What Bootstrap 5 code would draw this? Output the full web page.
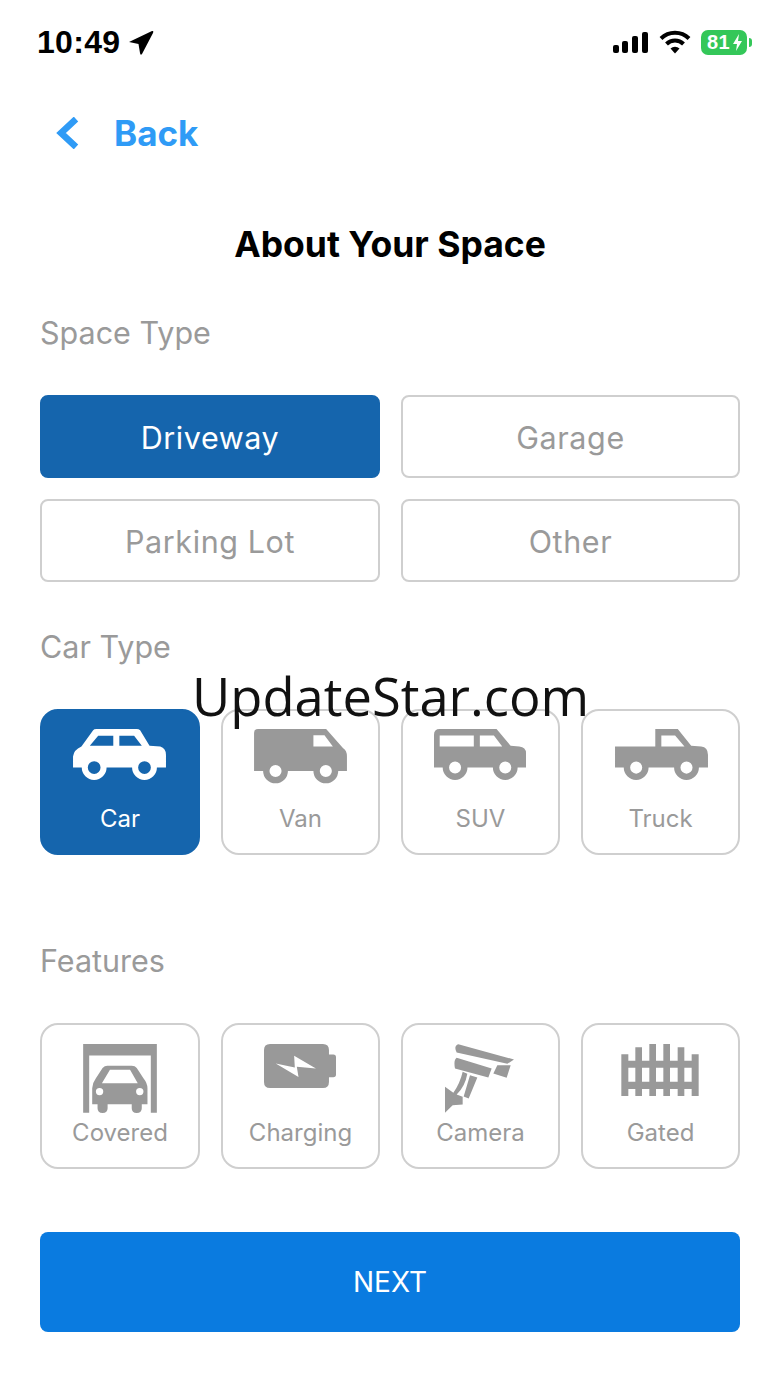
<!doctype html>
<html lang="en"><head><meta charset="utf-8"><title>About Your Space</title>
<link href="https://cdn.jsdelivr.net/npm/bootstrap@5.3.0/dist/css/bootstrap.min.css" rel="stylesheet">
<style>
html,body{background:#fff}
.screen{position:relative;width:780px;height:1387px;overflow:hidden;padding:0 40px;font-family:Inter,"Liberation Sans",sans-serif}
.statusrow{height:84px;margin:0 -12px 0 -3px}
.clock{font-family:"Liberation Sans",sans-serif;font-weight:700;font-size:32px;line-height:1;color:#000;letter-spacing:.3px}
.sig{margin-right:9px}
.wifi{margin-right:10px}
.backrow{height:50px;margin-top:24px;color:#2f9bf6;font-size:35px;font-weight:700;line-height:50px;text-decoration:none;padding-left:16px;gap:33px}
.pagehead{height:50px;margin:62px 0 0;font-size:35.500px;font-weight:700;line-height:50px;color:#000;text-align:center}
.sectionhead{height:40px;line-height:40px;font-size:30.500px;color:#9a9a9a;margin:43px 0 42px;font-weight:400}
.optgrid{display:grid;grid-template-columns:340px 339px;column-gap:21px;row-gap:21px}
.optbtn{height:83px;border:2px solid #cfcfcf;border-radius:8px;background:#fff;color:#9a9a9a;font-size:30.500px;letter-spacing:.6px;padding:2px 0 0;line-height:77px}
.optbtn.chosen,.tile.chosen{background:#1565ad;border-color:#1565ad;color:#fff}
.tilegrid{display:grid;grid-template-columns:160px 159px 159px 159px;column-gap:21px}
.tile{height:146px;border:2px solid #cfcfcf;border-radius:18px;background:#fff;color:#9a9a9a;font-size:24px;position:relative}
.tile svg{position:absolute;fill:#999}
.tile.chosen svg{fill:#fff}
.tilecap{position:absolute;left:0;right:0;bottom:19px;line-height:30px;text-align:center}
.nextbtn{display:block;width:700px;height:100px;margin-top:63px;background:#0a7be0;border:0;border-radius:8px;color:#fff;font-size:28px;line-height:100px;padding:0}
.stamp{position:absolute;left:192px;top:660px;font-family:"Open Sans",sans-serif;font-size:52.500px;line-height:72px;color:#111;white-space:nowrap}
.battery{position:relative;width:46px;height:25px;background:#34c759;border-radius:7px;color:#fff;font-family:"Liberation Sans",sans-serif;font-weight:700;font-size:20px;line-height:25px;padding-left:6px;letter-spacing:.5px}
.battery svg{position:absolute;right:4px;top:4px}
.nub{width:3px;height:9px;background:#34c759;border-radius:0 3px 3px 0;margin-left:2px}
</style></head><body>
<div class="screen">
  <div class="statusrow d-flex align-items-center justify-content-between">
    <div class="d-flex align-items-center gap-2">
      <span class="clock">10:49</span>
      <svg width="26" height="26" viewBox="0 0 26 26"><path d="M1 13 L24 2 Q26 1.500 25 4 L14 25 Q12.500 27 12 24 L10.500 15 Z" fill="#000"/></svg>
    </div>
    <div class="d-flex align-items-center">
      <svg width="38" height="23" viewBox="0 0 38 23" class="sig"><g fill="#000"><rect x="1" y="14" width="6" height="8" rx="2"/><rect x="10" y="10" width="6" height="12" rx="2"/><rect x="20" y="5" width="6" height="17" rx="2"/><rect x="30" y="1" width="6" height="21" rx="2"/></g></svg>
      <svg width="32" height="24" viewBox="0 0 32 24" class="wifi"><g fill="none" stroke="#000" stroke-width="4"><path d="M2 8.500 A20 20 0 0 1 30 8.500"/><path d="M7.500 14 A12 12 0 0 1 24.500 14"/></g><path d="M11.500 18.500 A6.500 6.500 0 0 1 20.500 18.500 L16 23.500Z" fill="#000"/></svg>
      <div class="battery">81<svg width="11" height="17" viewBox="0 0 11 17"><path d="M7 0 L1 10 L5 10 L4 17 L10 7 L6 7Z" fill="#fff"/></svg></div>
      <div class="nub"></div>
    </div>
  </div>

  <a href="#" class="backrow d-flex align-items-center">
    <svg width="25" height="32" viewBox="0 0 25 32"><path d="M20 2 L5 16 L20 30" fill="none" stroke="#2f9bf6" stroke-width="6.500"/></svg>
    <span>Back</span>
  </a>

  <h1 class="pagehead">About Your Space</h1>

  <h2 class="sectionhead">Space Type</h2>
  <div class="optgrid">
    <button class="btn optbtn chosen">Driveway</button>
    <button class="btn optbtn">Garage</button>
    <button class="btn optbtn">Parking Lot</button>
    <button class="btn optbtn">Other</button>
  </div>

  <h2 class="sectionhead" style="margin:45px 0 42px">Car Type</h2>
  <div class="tilegrid">
    <div class="tile chosen">
      <svg style="left:31px;top:18px" width="93" height="51" viewBox="130 88 277 152"><path fill-rule="evenodd" d="M130 170 Q132 150 155 140 L190 92 Q192 88 200 88 L320 88 Q326 88 330 92 L358 138 L390 140 Q407 145 407 165 L407 203 L380 203 A37 37 0 0 1 306 203 L230 203 A37 37 0 0 1 156 203 L130 203Z M180 138 L205 108 L250 108 L250 138Z M268 108 L312 108 L335 138 L268 138Z M174 203 a19 19 0 1 0 38 0 a19 19 0 1 0 -38 0Z M324 203 a19 19 0 1 0 38 0 a19 19 0 1 0 -38 0Z"/></svg>
      <div class="tilecap">Car</div>
    </div>
    <div class="tile">
      <svg style="left:31px;top:18px" width="93" height="55" viewBox="670 88 277 164"><path fill-rule="evenodd" d="M670 100 Q670 88 682 88 L885 88 L935 145 Q947 152 947 170 L947 213 L921 213 A37 37 0 0 1 847 213 L771 213 A37 37 0 0 1 697 213 L670 213Z M847 107 L880 107 L905 140 L847 140Z M716 213 a18 18 0 1 0 36 0 a18 18 0 1 0 -36 0Z M866 213 a18 18 0 1 0 36 0 a18 18 0 1 0 -36 0Z"/></svg>
      <div class="tilecap">Van</div>
    </div>
    <div class="tile">
      <svg style="left:31px;top:18px" width="92" height="51" viewBox="133 88 275 152"><path fill-rule="evenodd" d="M133 105 Q133 88 150 88 L320 88 L362 138 L388 140 Q408 142 408 160 L408 203 L383 203 A37 37 0 0 1 309 203 L233 203 A37 37 0 0 1 159 203 L133 203Z M150 107 L252 107 L252 140 L150 140Z M270 107 L312 107 L337 140 L270 140Z M178 203 a18 18 0 1 0 36 0 a18 18 0 1 0 -36 0Z M328 203 a18 18 0 1 0 36 0 a18 18 0 1 0 -36 0Z"/></svg>
      <div class="tilecap">SUV</div>
    </div>
    <div class="tile">
      <svg style="left:32px;top:18px" width="93" height="51" viewBox="673 88 277 152"><path fill-rule="evenodd" d="M673 140 L793 140 L793 88 L860 88 L900 138 L930 140 Q950 142 950 165 L950 203 L923 203 A37 37 0 0 1 849 203 L773 203 A37 37 0 0 1 699 203 L673 203Z M811 107 L852 107 L880 140 L811 140Z M718 203 a18 18 0 1 0 36 0 a18 18 0 1 0 -36 0Z M868 203 a18 18 0 1 0 36 0 a18 18 0 1 0 -36 0Z"/></svg>
      <div class="tilecap">Truck</div>
    </div>
  </div>

  <h2 class="sectionhead" style="margin:86px 0 42px">Features</h2>
  <div class="tilegrid">
    <div class="tile">
      <svg style="left:41px;top:19px" width="74" height="69" viewBox="160 88 220 206"><path fill-rule="evenodd" d="M160 88 L380 88 L380 293 L362 293 L362 122 L178 122 L178 293 L160 293Z M232 153 L305 153 Q315 153 320 160 L340 190 Q352 205 352 220 L352 268 L335 268 L335 280 Q335 294 320 294 Q305 294 305 280 L305 268 L233 268 L233 280 Q233 294 218 294 Q203 294 203 280 L203 268 L187 268 L187 220 Q187 205 198 190 L218 160 Q224 153 232 153Z M240 165 L300 165 L323 205 L216 205Z M198 230 a11 11 0 1 0 22 0 a11 11 0 1 0 -22 0Z M318 230 a11 11 0 1 0 22 0 a11 11 0 1 0 -22 0Z"/></svg>
      <div class="tilecap">Covered</div>
    </div>
    <div class="tile">
      <svg style="left:41px;top:19px" width="72" height="44" viewBox="703 87 215 131"><path fill-rule="evenodd" d="M721 87 L879 87 Q897 87 897 105 L897 118 L910 118 Q918 118 918 126 L918 178 Q918 186 910 186 L897 186 L897 200 Q897 218 879 218 L721 218 Q703 218 703 200 L703 105 Q703 87 721 87Z M738 145 L795 157 L793 122 L858 160 L801 155 L806 185Z"/></svg>
      <div class="tilecap">Charging</div>
    </div>
    <div class="tile">
      <svg style="left:42px;top:19px" width="69" height="69" viewBox="165 87 207 206"><path d="M205 87 L372 133 L352 146 L200 112 Q190 92 205 87Z M200 128 L305 160 L295 187 L195 160 Q190 135 200 128Z M322 150 L362 150 L350 188 L310 175Z M218 170 L232 176 Q225 215 200 238 L218 245 L218 268 L188 270 L165 293 L165 215 L190 233 Q210 205 218 170Z M240 180 L262 187 L236 250 L221 244Z"/></svg>
      <div class="tilecap">Camera</div>
    </div>
    <div class="tile">
      <svg style="left:38px;top:19px" width="78" height="52" viewBox="695 87 232 156"><path d="M695 118 H716 V243 H695Z M737 97 H757 V243 H737Z M779 87 H799 V243 H779Z M821 87 H841 V243 H821Z M864 97 H884 V243 H864Z M906 118 H927 V243 H906Z M695 137 H927 V158 H695Z M695 200 H927 V222 H695Z"/></svg>
      <div class="tilecap">Gated</div>
    </div>
  </div>

  <button class="btn nextbtn">NEXT</button>
  <div class="stamp">UpdateStar.com</div>
</div>
<script src="https://cdn.jsdelivr.net/npm/bootstrap@5.3.0/dist/js/bootstrap.bundle.min.js"></script>
</body></html>
